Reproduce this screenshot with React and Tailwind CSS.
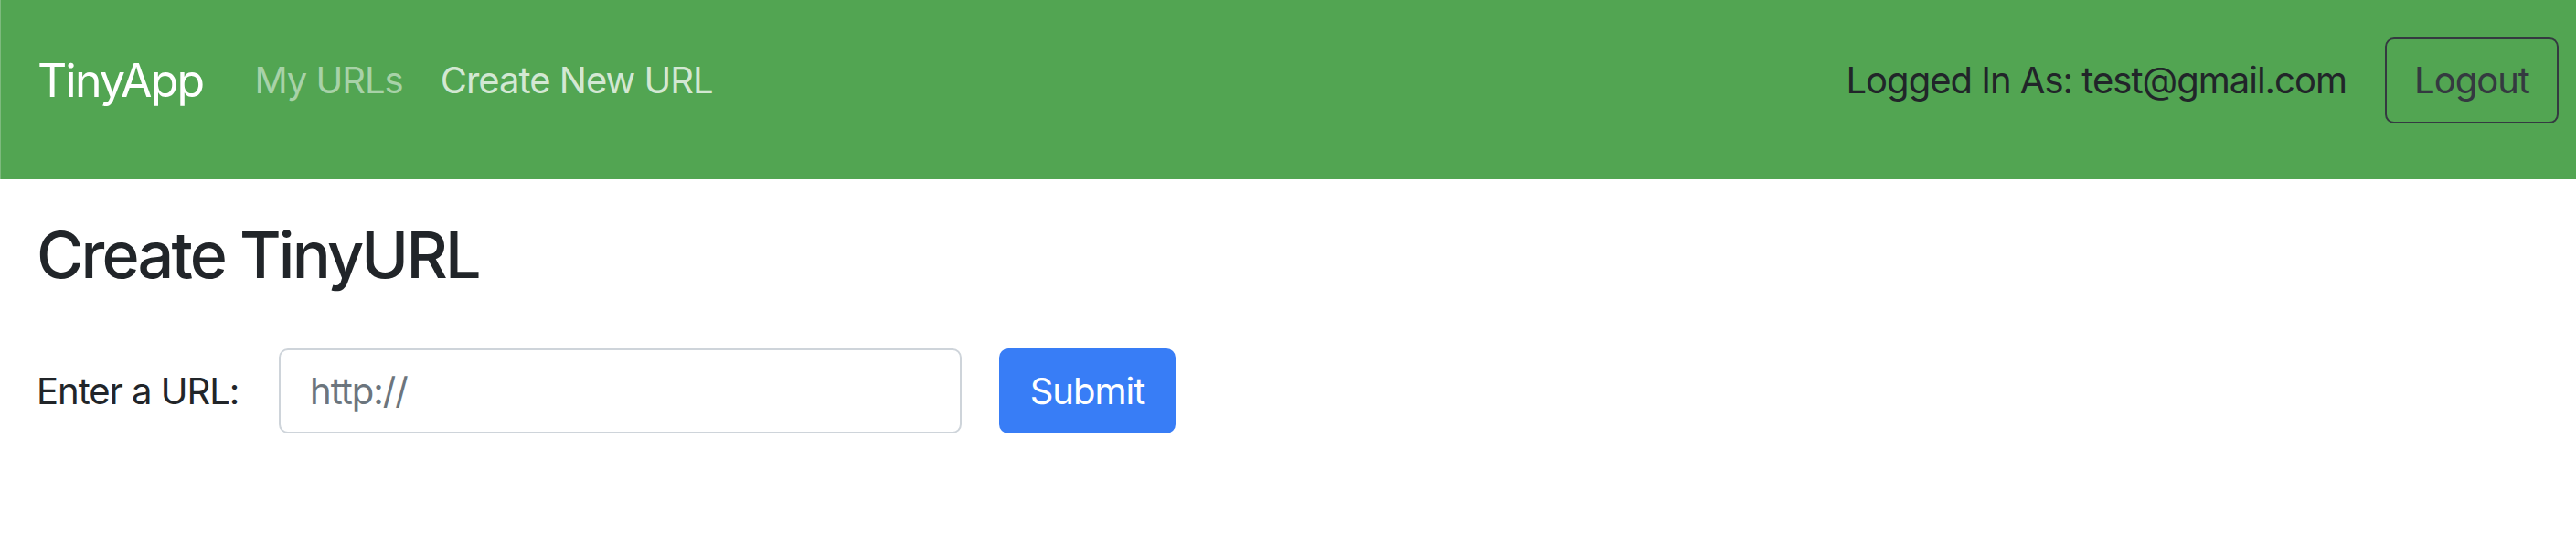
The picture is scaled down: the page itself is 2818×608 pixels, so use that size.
import { useState } from 'react'

function App() {
  const [longURL, setLongURL] = useState('')

  return (
    <div className="min-h-screen bg-white font-['Inter','Liberation_Sans',sans-serif] text-[#212529]">
      {/* Navbar */}
      <nav className="flex items-center bg-[#52a552] border-l border-[#7dba7d] pl-[40px] pr-[19px] pt-[41px] pb-[61px]">
        <a href="#" className="text-[50px] leading-[1.5] tracking-[-0.035em] text-white mr-[56px]">
          TinyApp
        </a>
        <div className="flex items-center gap-[41px]">
          <a href="#" className="text-[40px] leading-[1.5] tracking-[-0.025em] text-white/50">
            My URLs
          </a>
          <a href="#" className="text-[40px] leading-[1.5] tracking-[-0.025em] text-white/75">
            Create New URL
          </a>
        </div>
        <div className="ml-auto flex items-center gap-[42px]">
          <span className="text-[40px] leading-[1.5] tracking-[-0.025em] text-[#212529]">
            Logged In As: test@gmail.com
          </span>
          <button className="w-[190px] h-[94px] text-[40px] leading-[1.5] tracking-[-0.025em] text-[#343a40] border-2 border-[#343a40] rounded-[10px]">
            Logout
          </button>
        </div>
      </nav>

      {/* Create form */}
      <main className="px-[40px] pt-[41px]">
        <h3 className="text-[70px] leading-[1.2] tracking-[-0.04em] font-medium">Create TinyURL</h3>
        <form
          className="flex items-center mt-[60px]"
          onSubmit={(e) => e.preventDefault()}
        >
          <label className="w-[265px] text-[40px] leading-[1.5] tracking-[-0.025em]">Enter a URL:</label>
          <input
            type="text"
            value={longURL}
            onChange={(e) => setLongURL(e.target.value)}
            placeholder="http://"
            className="w-[747px] h-[93px] px-[32px] text-[40px] tracking-[-0.025em] border-2 border-[#ced4da] rounded-[10px] placeholder:text-[#6c757d] outline-none"
          />
          <button
            type="submit"
            className="ml-[41px] w-[193px] h-[93px] text-[40px] tracking-[-0.025em] text-white bg-[#387df6] rounded-[10px]"
          >
            Submit
          </button>
        </form>
      </main>
    </div>
  )
}

export default App
